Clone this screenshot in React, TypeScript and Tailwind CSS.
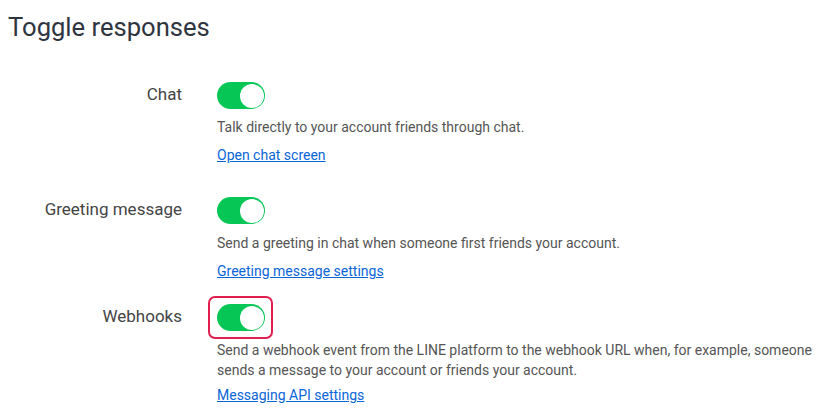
import React from "react";

type Row = {
  label: string;
  lines: string[];
  link: string;
  highlight?: boolean;
  rowGap: string;
  descGap: string;
  linkGap: string;
};

const ROWS: Row[] = [
  {
    label: "Chat",
    lines: ["Talk directly to your account friends through chat."],
    link: "Open chat screen",
    rowGap: "mt-0",
    descGap: "mt-[8px]",
    linkGap: "mt-2",
  },
  {
    label: "Greeting message",
    lines: ["Send a greeting in chat when someone first friends your account."],
    link: "Greeting message settings",
    rowGap: "mt-[32px]",
    descGap: "mt-[9px]",
    linkGap: "mt-2",
  },
  {
    label: "Webhooks",
    lines: [
      "Send a webhook event from the LINE platform to the webhook URL when, for example, someone",
      "sends a message to your account or friends your account.",
    ],
    link: "Messaging API settings",
    highlight: true,
    rowGap: "mt-[23px]",
    descGap: "mt-[9px]",
    linkGap: "mt-[5px]",
  },
];

function Toggle({ highlight }: { highlight?: boolean }) {
  return (
    <div className="relative h-[27px] w-12">
      {highlight && (
        <div className="absolute -top-[8px] -bottom-[8px] -left-[9px] -right-[8px] rounded-[7px] border-2 border-[#e01f4f]"></div>
      )}
      <div className="flex h-full w-full items-center justify-end rounded-full bg-[#06c755] px-[1.5px]">
        <div className="h-6 w-6 rounded-full bg-white"></div>
      </div>
    </div>
  );
}

export default function App() {
  return (
    <div className="h-[417px] w-[825px] overflow-hidden bg-white font-['Roboto',sans-serif]">
      <h1 className="pl-2 pt-[12px] text-[25.6px] leading-[30px] text-[#2f3540]">Toggle responses</h1>

      <div className="mt-[40px]">
        {ROWS.map((row) => (
          <div key={row.label} className={`flex gap-[35px] ${row.rowGap}`}>
            <div className="w-[182px] text-right text-[17px] leading-6 text-[#444]">{row.label}</div>
            <div className="flex flex-col items-start">
              <Toggle highlight={row.highlight} />
              <div className={`${row.descGap} text-[14px] leading-5 text-[#555]`}>
                {row.lines.map((l) => (
                  <div key={l}>{l}</div>
                ))}
              </div>
              <a href="#" className={`${row.linkGap} text-[14px] leading-5 text-[#0a66d8] underline`}>
                {row.link}
              </a>
            </div>
          </div>
        ))}
      </div>
    </div>
  );
}
